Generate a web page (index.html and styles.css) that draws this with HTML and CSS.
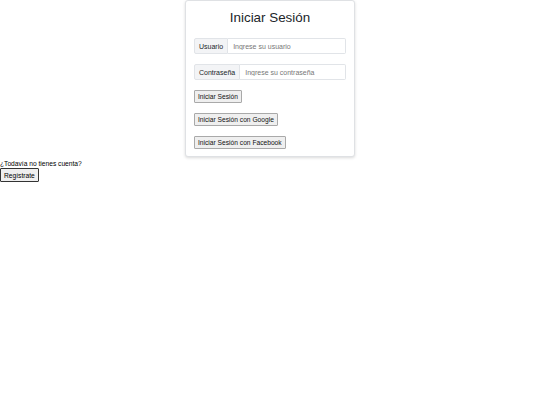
FILE: index.html
```html
<!DOCTYPE html>
<html lang="es">
<head>
<meta charset="utf-8">
<title>Iniciar Sesión</title>
<link rel="stylesheet" href="styles.css">
</head>
<body>
<div class="card">
  <h3 class="title">Iniciar Sesión</h3>
  <div class="input-group">
    <span class="group-label">Usuario</span>
    <input class="group-input" type="text" placeholder="Ingrese su usuario">
  </div>
  <div class="input-group">
    <span class="group-label">Contraseña</span>
    <input class="group-input" type="password" placeholder="Ingrese su contraseña">
  </div>
  <div class="actions">
    <button class="btn">Iniciar Sesión</button>
    <button class="btn">Iniciar Sesión con Google</button>
    <button class="btn">Iniciar Sesión con Facebook</button>
  </div>
</div>
<div class="register">
  <p class="register-text">¿Todavía no tienes cuenta?</p>
  <button class="btn btn-dark">Regístrate</button>
</div>
</body>
</html>
```

FILE: styles.css
```css
html, body {
  margin: 0;
  padding: 0;
  background: #ffffff;
  font-family: "Liberation Sans", Arial, sans-serif;
  color: #212529;
}

.card {
  width: 152px;
  margin: 0 auto;
  padding: 8px 8px 7px;
  border: 1px solid #dfe1e4;
  border-radius: 3px;
  box-shadow: 0 1px 3px rgba(0, 0, 0, 0.15);
  background: #fff;
  display: flex;
  flex-direction: column;
}

.title {
  margin: 0 0 11px;
  font-size: 13.4px;
  line-height: 18px;
  font-weight: normal;
  text-align: center;
  color: #212529;
}

.input-group {
  display: flex;
  height: 16px;
  margin-bottom: 10px;
  box-sizing: border-box;
}

.group-label {
  display: flex;
  align-items: center;
  padding: 0 4px;
  font-size: 7px;
  background: #f3f4f6;
  border: 1px solid #e1e4e8;
  border-radius: 2px 0 0 2px;
  color: #212529;
  white-space: nowrap;
}

.group-input {
  flex: 1;
  min-width: 0;
  margin: 0;
  padding: 0 5px;
  font-family: "Liberation Sans", Arial, sans-serif;
  font-size: 7px;
  border: 1px solid #e1e4e8;
  border-left: none;
  border-radius: 0 2px 2px 0;
  background: #fff;
  outline: none;
}

.group-input::placeholder {
  color: #777777;
  opacity: 1;
}

.actions {
  display: flex;
  flex-direction: column;
  align-items: flex-start;
  gap: 10px;
}

.btn {
  height: 13px;
  margin: 0;
  padding: 0 3px;
  font-family: "Liberation Sans", Arial, sans-serif;
  font-size: 6.67px;
  line-height: 11px;
  color: #111;
  background: #efefef;
  border: 1px solid #a9a9a9;
  border-radius: 1px;
}

.register {
  display: flex;
  flex-direction: column;
  align-items: flex-start;
}

.register-text {
  margin: 0;
  padding-top: 2px;
  font-size: 6.67px;
  line-height: 9px;
  color: #000;
}

.btn-dark {
  height: 14px;
  border-color: #333;
  color: #000;
}
```
